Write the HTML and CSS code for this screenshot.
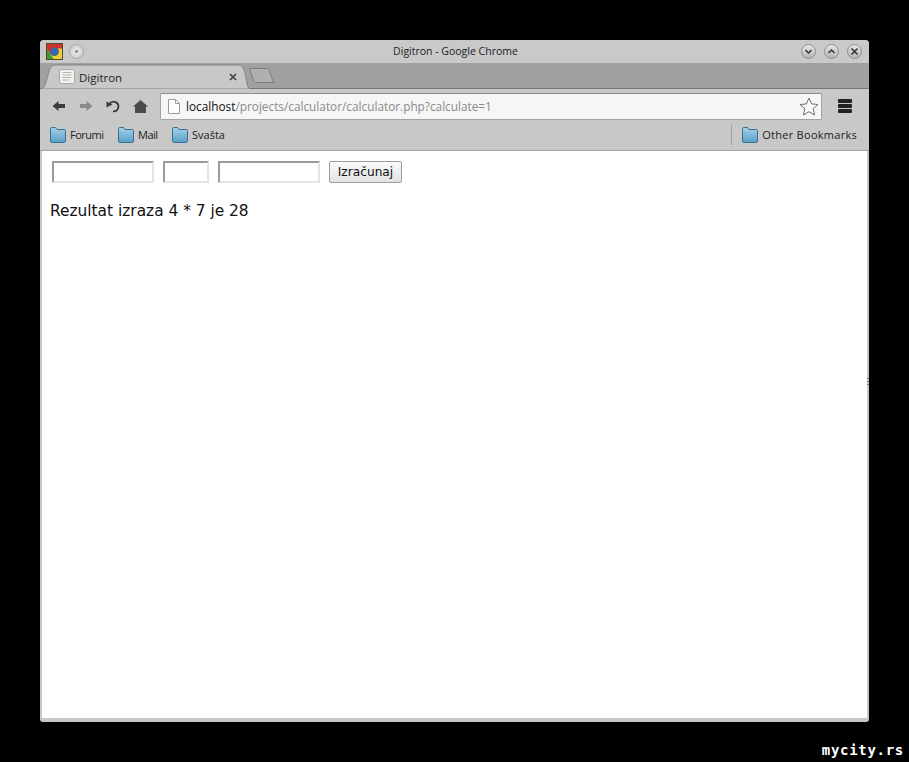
FILE: index.html
```html
<!DOCTYPE html>
<html lang="sr">
<head>
    <meta charset="UTF-8">
    <title>Digitron - Google Chrome</title>
    <link rel="stylesheet" href="styles.css">
</head>
<body>
    <div class="window">
        <div class="titlebar">
            <svg class="app-icon" width="17" height="17" viewBox="0 0 17 17">
                <rect x="0.5" y="0.5" width="16" height="16" fill="#f0cf35" stroke="#4b4b2e"/>
                <path d="M1 1H16V5.500H8.500L4.500 11L1 6Z" fill="#d5312a"/>
                <path d="M1 6L4.500 11L7.500 16H1Z" fill="#3a9a34"/>
                <circle cx="8.500" cy="8.500" r="3.800" fill="#2d6cc2" stroke="#5a5f78" stroke-width="1.300"/>
            </svg>
            <span class="menu-dot"></span>
            <div class="title-text">Digitron - Google Chrome</div>
            <div class="win-buttons">
                <span class="win-btn"><svg width="9" height="9" viewBox="0 0 9 9"><path d="M1.500 3L4.500 6L7.500 3" fill="none" stroke="#333" stroke-width="1.500"/></svg></span>
                <span class="win-btn"><svg width="9" height="9" viewBox="0 0 9 9"><path d="M1.500 6L4.500 3L7.500 6" fill="none" stroke="#333" stroke-width="1.500"/></svg></span>
                <span class="win-btn"><svg width="9" height="9" viewBox="0 0 9 9"><path d="M1.500 1.500L7.500 7.500M7.500 1.500L1.500 7.500" fill="none" stroke="#333" stroke-width="1.500"/></svg></span>
            </div>
        </div>

        <div class="tabstrip">
            <div class="tab">
                <svg class="tab-shape" width="210" height="26" viewBox="0 0 210 26">
                    <path d="M0 26C4 25 5 20 7 12C9 5 10 2 15 2H197C201 2 203 5 204 10C206 19 206 25 209 26Z" fill="#c8c8c8" stroke="#858585"/>
                </svg>
                <svg class="tab-favicon" width="16" height="15" viewBox="0 0 16 15">
                    <rect x="0.500" y="0.500" width="15" height="14" rx="2" fill="#f1f1ee" stroke="#a8a8a8"/>
                    <path d="M3.500 3.500H12.500M3.500 6H12.500M3.500 8.500H12.500M3.500 11H10" stroke="#b4b4b4"/>
                </svg>
                <span class="tab-title">Digitron</span>
                <svg class="tab-close" width="8" height="8" viewBox="0 0 8 8"><path d="M1 1L7 7M7 1L1 7" stroke="#444" stroke-width="1.700"/></svg>
            </div>
            <svg class="new-tab" width="27" height="17" viewBox="0 0 27 17">
                <path d="M2 1.500C1 1.500 0.500 2 1 3L4 12C5 15 6 15.500 8 15.500H25.500C24 15 23.500 13 22.500 10L20.500 4C20 2 19 1.500 17 1.500Z" fill="#b0b0b0" stroke="#7d7d7d"/>
            </svg>
        </div>

        <div class="toolbar">
            <div class="nav-buttons">
                <svg width="14" height="12" viewBox="0 0 14 12"><path d="M0.500 6L6.500 1V4H13V8H6.500V11Z" fill="#3c3c3c"/></svg>
                <svg width="14" height="12" viewBox="0 0 14 12"><path d="M13.500 6L7.500 1V4H1V8H7.500V11Z" fill="#8a8a8a"/></svg>
                <svg width="14" height="14" viewBox="0 0 14 14">
                    <path d="M7 12.300A4.800 4.800 0 1 0 3.500 5" fill="none" stroke="#3c3c3c" stroke-width="1.800"/>
                    <path d="M0.500 2.500L6.500 5.500L0.500 8.500Z" fill="#3c3c3c"/>
                </svg>
                <svg width="15" height="13" viewBox="0 0 15 13"><path d="M7.500 0L15 6.500H13V13H2V6.500H0Z" fill="#4a4a4a"/></svg>
            </div>
            <div class="omnibox">
                <svg class="page-icon" width="12" height="15" viewBox="0 0 12 15">
                    <path d="M0.500 0.500H7.500L11.500 4.500V14.500H0.500Z" fill="#fff" stroke="#9a9a9a"/>
                    <path d="M7.500 0.500V4.500H11.500" fill="none" stroke="#9a9a9a"/>
                </svg>
                <span class="url"><b class="host">localhost</b>/projects/calculator/calculator.php?calculate=1</span>
                <svg class="star" width="20" height="19" viewBox="0 0 20 19">
                    <path d="M10 1L12.600 6.900L19 7.500L14.200 11.700L15.600 18L10 14.700L4.400 18L5.800 11.700L1 7.500L7.400 6.900Z" fill="#fafafa" stroke="#6e6e6e"/>
                </svg>
            </div>
            <div class="menu-icon"><span></span><span></span><span></span></div>
        </div>

        <div class="bookmarks">
            <div class="bookmark tight">
                <svg class="folder" width="16" height="16" viewBox="0 0 16 16"><use href="#folder-icon"/></svg>
                <span>Forumi</span>
            </div>
            <div class="bookmark tight">
                <svg class="folder" width="16" height="16" viewBox="0 0 16 16"><use href="#folder-icon"/></svg>
                <span>Mail</span>
            </div>
            <div class="bookmark">
                <svg class="folder" width="16" height="16" viewBox="0 0 16 16"><use href="#folder-icon"/></svg>
                <span>Svašta</span>
            </div>
            <div class="bookmark-sep"></div>
            <div class="bookmark other">
                <svg class="folder" width="16" height="16" viewBox="0 0 16 16"><use href="#folder-icon"/></svg>
                <span>Other Bookmarks</span>
            </div>
        </div>

        <div class="page">
            <form class="calc-form">
                <input class="field-wide" type="text">
                <input class="field-small" type="text">
                <input class="field-wide" type="text">
                <button type="button">Izračunaj</button>
            </form>
            <p class="result">Rezultat izraza 4 * 7 je 28</p>
            <div class="grip"><span></span><span></span><span></span></div>
        </div>
    </div>

    <div class="watermark">mycity.rs</div>

    <svg class="icon-defs" width="0" height="0">
        <defs>
            <linearGradient id="folder-fill" x1="0" y1="0" x2="0" y2="1">
                <stop offset="0" stop-color="#a5d2ea"/>
                <stop offset="1" stop-color="#5a9fc6"/>
            </linearGradient>
            <symbol id="folder-icon" viewBox="0 0 16 16">
                <path d="M0.500 14V1.500C0.500 1 1 0.500 1.500 0.500H5.500L7 2.500H14.500C15 2.500 15.500 3 15.500 3.500V14C15.500 14.800 15 15.500 14 15.500H2C1 15.500 0.500 14.800 0.500 14Z" fill="url(#folder-fill)" stroke="#33708f"/>
            </symbol>
        </defs>
    </svg>
</body>
</html>
```

FILE: styles.css
```css
body {
    margin: 0;
    background-color: #000;
    font-family: "Open Sans", "Liberation Sans", sans-serif;
    height: 762px;
    overflow: hidden;
}

.window {
    width: 829px;
    height: 682px;
    margin: 40px 0 0 40px;
    background-color: #c8c8c8;
    border-radius: 4px 4px 3px 3px;
    display: flex;
    flex-direction: column;
    overflow: hidden;
}

.titlebar {
    height: 23px;
    flex: none;
    display: flex;
    align-items: center;
    padding: 0 7px 0 6px;
    position: relative;
    background-color: #c9c9c9;
}

.app-icon {
    flex: none;
}

.menu-dot {
    width: 15px;
    height: 15px;
    box-sizing: border-box;
    margin-left: 6px;
    border-radius: 50%;
    border: 1px solid #a8a8a8;
    background: radial-gradient(circle, #8a8a8a 0, #8a8a8a 1px, #e4e4e4 2px, #c4c4c4 100%);
}

.title-text {
    position: absolute;
    left: 0;
    right: 0;
    padding: 0 0 2px 2px;
    text-align: center;
    font-size: 10.500px;
    color: #222;
}

.win-buttons {
    margin-left: auto;
    display: flex;
    gap: 8px;
}

.win-btn {
    width: 15px;
    height: 15px;
    box-sizing: border-box;
    border-radius: 50%;
    border: 1px solid #8f8f8f;
    background: linear-gradient(#e6e6e6, #b4b4b4);
    display: flex;
    align-items: center;
    justify-content: center;
}

.tabstrip {
    height: 25px;
    flex: none;
    display: flex;
    align-items: flex-end;
    padding-left: 1px;
    background-color: #a0a0a0;
    border-top: 1px solid #8f8f8f;
    border-bottom: 1px solid #777;
    margin-top: -1px;
}

.tab {
    width: 210px;
    height: 26px;
    flex: none;
    position: relative;
    display: flex;
    align-items: center;
    padding: 1px 0 0 18px;
    box-sizing: border-box;
    margin-bottom: -1px;
}

.tab-shape {
    position: absolute;
    left: 0;
    top: 0;
}

.tab-favicon,
.tab-title,
.tab-close {
    position: relative;
}

.tab-title {
    margin: 1px 0 0 4px;
    font-size: 11.500px;
    color: #222;
}

.tab-close {
    margin-left: auto;
    margin-right: 14px;
}

.new-tab {
    margin: 0 0 4px -2px;
}

.toolbar {
    height: 32px;
    flex: none;
    display: flex;
    align-items: center;
    padding: 1px 0 0 12px;
    background-color: #c8c8c8;
}

.nav-buttons {
    display: flex;
    align-items: center;
    gap: 13px;
}

.omnibox {
    width: 662px;
    height: 27px;
    margin-left: 12px;
    box-sizing: border-box;
    display: flex;
    align-items: center;
    padding: 0 2px 0 7px;
    background-color: #f6f6f6;
    border: 1px solid #a2a2a2;
    border-top-color: #8e8e8e;
    border-radius: 2px;
}

.url {
    margin-left: 6px;
    font-size: 11.800px;
    color: #8a8a8a;
}

.host {
    font-weight: 400;
    color: #111;
}

.star {
    margin-left: auto;
}

.menu-icon {
    margin-left: 16px;
    display: flex;
    flex-direction: column;
    gap: 1px;
}

.menu-icon span {
    display: block;
    width: 14px;
    height: 4px;
    background-color: #222;
    border-radius: 1px;
}

.bookmarks {
    height: 26px;
    flex: none;
    display: flex;
    align-items: center;
    padding: 0 12px 2px 10px;
    font-size: 11px;
    color: #222;
    background-color: #c8c8c8;
    border-bottom: 1px solid #a4a4a4;
}

.bookmark {
    display: flex;
    align-items: center;
    gap: 4px;
    margin-right: 15px;
}

.bookmark span {
    padding-bottom: 2px;
}

.bookmark.tight {
    margin-right: 14.500px;
}

.bookmark.tight span {
    letter-spacing: -0.500px;
}

.bookmark.other {
    margin-right: 0;
}

.bookmark.other span {
    letter-spacing: 0.270px;
}

.bookmark-sep {
    width: 1px;
    height: 20px;
    margin: 0 10px 0 auto;
    background-color: #a0a0a0;
}

.page {
    flex: 1;
    background-color: #fff;
    margin: 0 2px 4px 2px;
    padding: 10px 8px;
    color: #000;
    font-family: "DejaVu Sans", sans-serif;
    position: relative;
}

.calc-form {
    display: flex;
    align-items: center;
    gap: 9px;
    padding-left: 2px;
}

.calc-form input {
    height: 22px;
    box-sizing: border-box;
    padding: 0;
    background-color: #fff;
    border: 2px solid;
    border-color: #9a9a9a #e4e4e4 #e4e4e4 #9a9a9a;
    border-radius: 0;
}

.field-wide {
    width: 102px;
}

.field-small {
    width: 46px;
}

.calc-form button {
    height: 22px;
    width: 73px;
    padding: 0;
    font-family: "DejaVu Sans", sans-serif;
    font-size: 12.200px;
    color: #111;
    background: linear-gradient(#fbfbfb, #e2e2e2);
    border: 1px solid #9c9c9c;
    border-radius: 2px;
}

.result {
    margin: 18px 0 0 0;
    font-size: 15.400px;
    line-height: 20px;
    color: #111;
}

.grip {
    position: absolute;
    right: -2px;
    top: 227px;
    display: flex;
    flex-direction: column;
    gap: 2px;
}

.grip span {
    display: block;
    width: 2px;
    height: 1px;
    background-color: #777;
}

.watermark {
    margin: 20px 5px 0 0;
    text-align: right;
    font-family: "DejaVu Sans Mono", monospace;
    font-weight: 700;
    font-size: 14px;
    letter-spacing: 0.700px;
    line-height: 16px;
    color: #fff;
}

.icon-defs {
    position: absolute;
}
```
